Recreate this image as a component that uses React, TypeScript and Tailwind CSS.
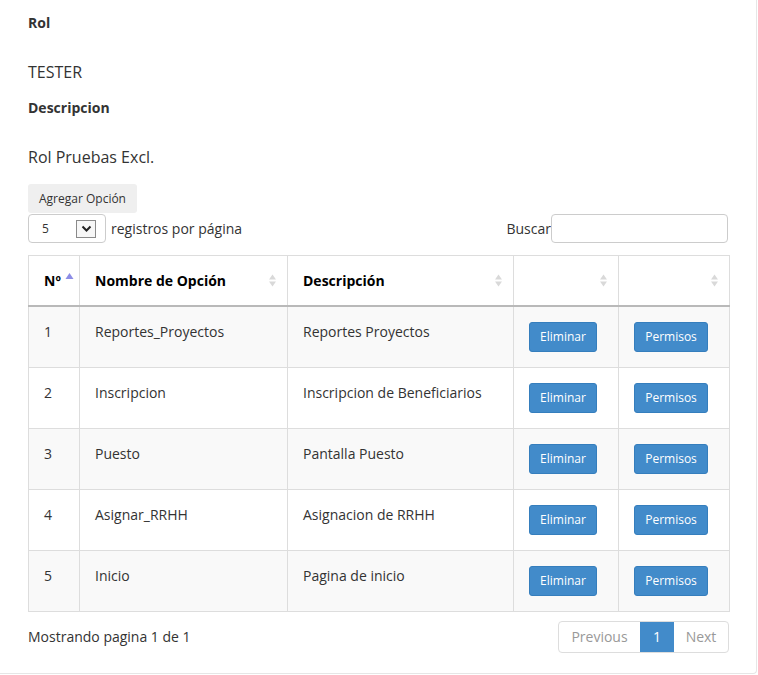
import React from "react";

const rows = [
  { n: 1, nombre: "Reportes_Proyectos", desc: "Reportes Proyectos" },
  { n: 2, nombre: "Inscripcion", desc: "Inscripcion de Beneficiarios" },
  { n: 3, nombre: "Puesto", desc: "Pantalla Puesto" },
  { n: 4, nombre: "Asignar_RRHH", desc: "Asignacion de RRHH" },
  { n: 5, nombre: "Inicio", desc: "Pagina de inicio" },
];

function SortIcon({ active }: { active?: boolean }) {
  if (active) {
    return (
      <svg width="9" height="8" viewBox="0 0 9 8" className="shrink-0">
        <path d="M0.5 7 L4.5 1 L8.5 7 Z" fill="#8d8de6" />
      </svg>
    );
  }
  return (
    <svg width="9" height="15" viewBox="0 0 9 15" className="shrink-0">
      <path d="M1 6.5 L4.5 1.5 L8 6.5 Z" fill="#d9d9d9" />
      <path d="M1 8.5 L4.5 13.5 L8 8.5 Z" fill="#d9d9d9" />
    </svg>
  );
}

function Th({ children, active, className = "" }: { children?: React.ReactNode; active?: boolean; className?: string }) {
  return (
    <th className={`border border-[#dddddd] border-b-2 border-b-[#b9b9b9] px-[15px] h-[50px] align-middle text-left ${className}`}>
      <div className={`flex items-center ${active ? "" : "justify-between"}`}>
        <span className="font-bold text-black">{children}</span>
        <span className={active ? "ml-[4px] -mt-[8px]" : "-mr-[5px]"}>
          <SortIcon active={active} />
        </span>
      </div>
    </th>
  );
}

function BlueBtn({ label, w }: { label: string; w: string }) {
  return (
    <button className={`${w} h-[30px] rounded-[3px] bg-[#428bca] border border-[#357ebd] text-white text-[12px] leading-[28px] text-center`}>
      {label}
    </button>
  );
}

export default function App() {
  return (
    <div
      className="w-[758px] h-[675px] bg-white text-[#333333]"
      style={{ fontFamily: '"Open Sans", "Noto Sans", sans-serif' }}
    >
      <div className="w-[757px] h-[674px] border-r border-b border-[#e6e6e6] rounded-br-[4px] pl-[28px] pr-[28px] pt-[13px]">
        <div className="text-[14px] leading-[20px] font-bold">Rol</div>
        <div className="mt-[29px] text-[16px] leading-[20px]">TESTER</div>
        <div className="mt-[16px] text-[14px] leading-[20px] font-bold">Descripcion</div>
        <div className="mt-[29px] text-[16px] leading-[20px]">Rol Pruebas Excl.</div>

        <button className="mt-[17px] h-[29px] px-[11px] rounded-[3px] bg-[#efefef] text-[12px] text-[#333333] leading-[29px] block">
          Agregar Opción
        </button>

        <div className="flex items-center justify-between h-[29px] mt-[1px]">
          <div className="flex items-center">
            <div className="w-[78px] h-[29px] border border-[#cccccc] rounded-[4px] flex items-center justify-between pl-[13px] pr-[9px]">
              <span className="text-[12px]">5</span>
              <span className="w-[20px] h-[18px] border border-[#8a8a8a] bg-[#f7f7f7] flex items-center justify-center">
                <svg width="11" height="8" viewBox="0 0 11 8">
                  <path d="M1.5 1.5 L5.5 5.5 L9.5 1.5" fill="none" stroke="#222" strokeWidth="2" />
                </svg>
              </span>
            </div>
            <span className="ml-[5px] text-[14px]">registros por página</span>
          </div>
          <div className="flex items-center">
            <span className="text-[14px]">Buscar</span>
            <div className="w-[177px] h-[29px] border border-[#cccccc] rounded-[4px]" />
          </div>
        </div>

        <table className="mt-[12px] w-[701px] table-fixed border-collapse text-[14px]">
          <colgroup>
            <col className="w-[51px]" />
            <col className="w-[208px]" />
            <col className="w-[226px]" />
            <col className="w-[105px]" />
            <col className="w-[111px]" />
          </colgroup>
          <thead>
            <tr>
              <Th active>Nº</Th>
              <Th>Nombre de Opción</Th>
              <Th>Descripción</Th>
              <Th />
              <Th />
            </tr>
          </thead>
          <tbody>
            {rows.map((r, i) => (
              <tr key={r.n} className={i % 2 === 0 ? "bg-[#f9f9f9]" : "bg-white"}>
                <td className="border border-[#dddddd] px-[15px] py-[15px] align-top leading-[20px]">{r.n}</td>
                <td className="border border-[#dddddd] px-[15px] py-[15px] align-top leading-[20px]">{r.nombre}</td>
                <td className="border border-[#dddddd] px-[15px] py-[15px] align-top leading-[20px]">{r.desc}</td>
                <td className="border border-[#dddddd] px-[15px] py-[15px] align-top">
                  <BlueBtn label="Eliminar" w="w-[68px]" />
                </td>
                <td className="border border-[#dddddd] px-[15px] py-[15px] align-top">
                  <BlueBtn label="Permisos" w="w-[74px]" />
                </td>
              </tr>
            ))}
          </tbody>
        </table>

        <div className="mt-[9px] flex items-center justify-between w-[701px]">
          <span className="text-[14px]">Mostrando pagina 1 de 1</span>
          <div className="flex h-[32px] border border-[#dddddd] rounded-[4px] text-[14px]">
            <span className="w-[81px] flex items-center justify-center text-[#999999]">Previous</span>
            <span className="w-[34px] flex items-center justify-center bg-[#428bca] text-white">1</span>
            <span className="w-[54px] flex items-center justify-center text-[#999999]">Next</span>
          </div>
        </div>
      </div>
    </div>
  );
}
